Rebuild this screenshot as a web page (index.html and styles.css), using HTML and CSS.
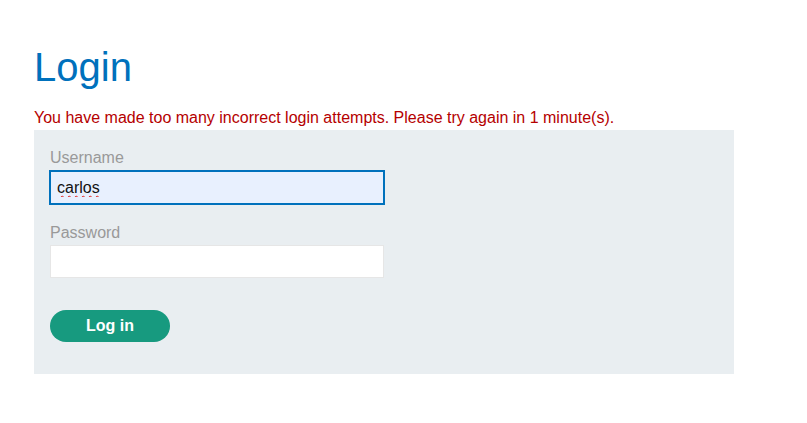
FILE: index.html
```html
<!DOCTYPE html>
<html lang="en">
<head>
<meta charset="utf-8">
<title>Login</title>
<link rel="stylesheet" href="styles.css">
</head>
<body>
<div class="page">
  <h1 class="title">Login</h1>
  <p class="error">You have made too many incorrect login attempts. Please try again in 1 minute(s).</p>
  <form class="login-form" onsubmit="return false">
    <label class="label" for="username">Username</label>
    <input class="field field-focus" id="username" type="text" value="carlos" spellcheck="true">
    <label class="label label-second" for="password">Password</label>
    <input class="field" id="password" type="password">
    <button class="btn" type="submit">Log in</button>
  </form>
</div>
</body>
</html>
```
FILE: styles.css
```css
html, body {
  margin: 0;
  padding: 0;
  background: #fff;
}
body {
  font-family: "Liberation Sans", Arial, sans-serif;
  color: #333;
}
.page {
  padding: 43px 0 0 34px;
  width: 700px;
}
.title {
  margin: 0;
  font-size: 40px;
  line-height: 48px;
  font-weight: normal;
  color: #0071bc;
}
.error {
  margin: 17px 0 2px;
  font-size: 16px;
  line-height: 20px;
  color: #b50000;
  white-space: nowrap;
}
.login-form {
  display: flex;
  flex-direction: column;
  align-items: flex-start;
  background: #e9eef1;
  padding: 18px 16px 32px;
}
.label {
  font-size: 16px;
  line-height: 20px;
  color: #999;
  margin-bottom: 3px;
}
.label-second {
  margin-top: 19px;
  margin-bottom: 2px;
}
.field {
  box-sizing: border-box;
  width: 334px;
  height: 33px;
  margin: 0;
  padding: 0 6px;
  border: 1px solid #e6e6e6;
  background: #fff;
  font-family: "Liberation Sans", Arial, sans-serif;
  font-size: 16px;
  color: #111;
  outline: none;
}
.field-focus {
  border-color: #0071bc;
  outline: 1px solid #0071bc;
  background: #e8f0fe;
  text-decoration: underline wavy #e0201c;
  text-decoration-thickness: 1px;
  text-decoration-skip-ink: none;
  text-underline-offset: 2px;
}
.btn {
  margin-top: 32px;
  width: 120px;
  height: 32px;
  border: 0;
  border-radius: 16px;
  background: #179a7f;
  color: #fff;
  font-family: "Liberation Sans", Arial, sans-serif;
  font-size: 16px;
  font-weight: bold;
  padding: 0;
  cursor: pointer;
}
```
